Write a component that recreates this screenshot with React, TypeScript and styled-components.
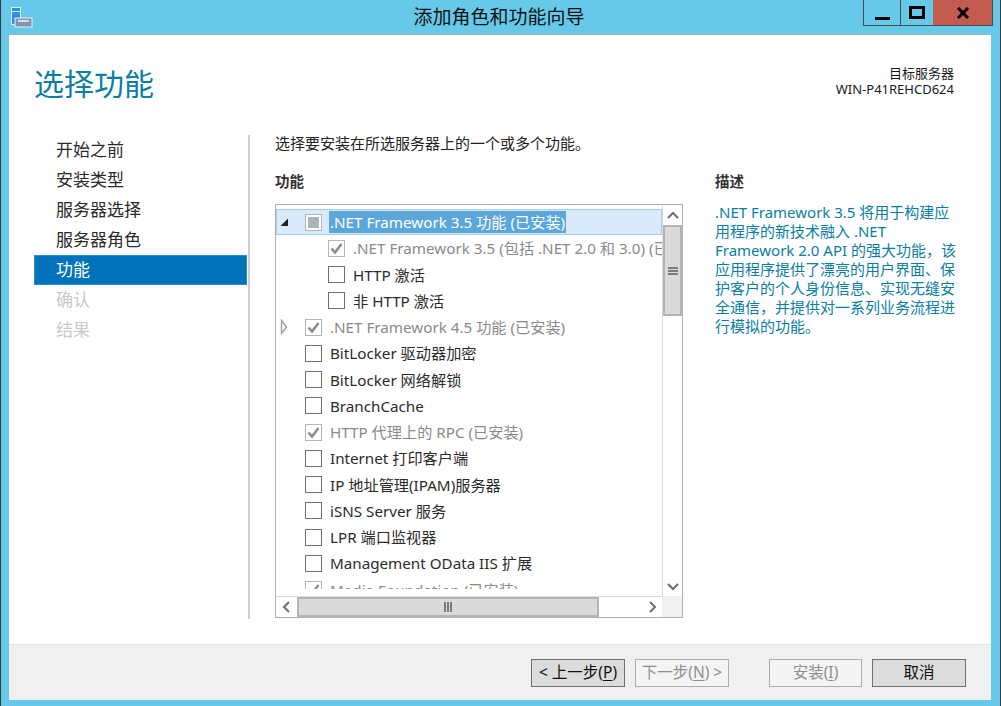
import styled, { createGlobalStyle } from "styled-components";

const GlobalStyle = createGlobalStyle`
  html, body {
    margin: 0;
    padding: 0;
    width: 1001px;
    height: 706px;
    overflow: hidden;
    background: #66c9ea;
  }
  * { box-sizing: border-box; }
  body {
    font-family: "Noto Sans", "Noto Sans CJK SC", sans-serif;
    color: #1e1e1e;
  }
`;

const Frame = styled.div`
  width: 1001px;
  height: 706px;
  display: flex;
  flex-direction: column;
  background: #66c9ea;
  border-left: 1px solid #3a3a3a;
  border-right: 1px solid #3a3a3a;
  padding: 0 9px 6px 8px;
`;

const TitleBar = styled.div`
  height: 35px;
  flex: none;
  position: relative;
  display: flex;
  justify-content: center;
`;

const AppIcon = styled.svg`
  position: absolute;
  left: 2px;
  top: 7px;
`;

const Title = styled.div`
  font-size: 19px;
  line-height: 34px;
  color: #111;
  padding-right: 2px;
`;

const WinButtons = styled.div`
  position: absolute;
  right: -2px;
  top: 0;
  height: 26px;
  display: flex;
  border: 1px solid #4a4a4a;
  border-top: none;
`;

const WinButton = styled.div<{ $w: number; $close?: boolean }>`
  width: ${(p) => p.$w}px;
  background: ${(p) => (p.$close ? "#c25b50" : "transparent")};
  border-left: ${(p) => (p.$close ? "none" : "1px solid #4a4a4a")};
  display: flex;
  align-items: center;
  justify-content: center;
  &:first-child { border-left: none; }
`;

const Client = styled.div`
  flex: 1;
  display: flex;
  flex-direction: column;
  background: #fff;
  box-shadow: 0 -1px 0 #9db7c2;
`;

const Header = styled.div`
  height: 100px;
  flex: none;
  display: flex;
  justify-content: space-between;
  padding: 29px 37px 0 25px;
`;

const PageTitle = styled.div`
  font-size: 30px;
  line-height: 40px;
  color: #0a7ea4;
`;

const ServerInfo = styled.div`
  font-size: 13px;
  line-height: 16px;
  text-align: right;
  padding-top: 1px;
  color: #1a1a1a;
`;

const Main = styled.div`
  flex: 1;
  display: flex;
  min-height: 0;
`;

const Nav = styled.div`
  width: 241px;
  flex: none;
  height: 484px;
  margin-right: 25px;
  border-right: 2px solid #d0d0d0;
  padding: 0 1px 0 25px;
`;

const NavItem = styled.div<{ $active?: boolean; $disabled?: boolean }>`
  height: 30px;
  line-height: 30px;
  font-size: 17px;
  padding-left: 22px;
  color: ${(p) => (p.$active ? "#fff" : p.$disabled ? "#c9c9c9" : "#2a2a2a")};
  background: ${(p) => (p.$active ? "#0072bc" : "transparent")};
  box-shadow: ${(p) => (p.$active ? "inset 0 0 0 1px #2a8bc9" : "none")};
`;

const Content = styled.div`
  flex: 1;
  min-width: 0;
`;

const Intro = styled.div`
  font-size: 15px;
  line-height: 17px;
  height: 36px;
  color: #222;
`;

const Columns = styled.div`
  display: flex;
  gap: 32px;
`;

const ListColumn = styled.div`
  width: 408px;
  flex: none;
`;

const SectionTitle = styled.div<{ $h: number }>`
  font-size: 14.5px;
  line-height: 20px;
  height: ${(p) => p.$h}px;
  font-weight: 700;
  color: #333;
`;

const ListBox = styled.div`
  width: 408px;
  height: 414px;
  border: 1.5px solid #b0b0b0;
  display: grid;
  grid-template-columns: 1fr 20px;
  grid-template-rows: 1fr 21px;
  background: #fff;
`;

const Rows = styled.div`
  overflow: hidden;
  padding-top: 4px;
  margin-bottom: 7px;
  min-width: 0;
  min-height: 0;
`;

const Row = styled.div<{ $selected?: boolean }>`
  height: 26.25px;
  display: flex;
  align-items: center;
  white-space: nowrap;
  font-size: 15.2px;
  background: ${(p) => (p.$selected ? "#d9eafc" : "transparent")};
  box-shadow: ${(p) => (p.$selected ? "inset 0 0 0 1px #a5cdf0" : "none")};
`;

const ArrowSlot = styled.div`
  width: 29px;
  flex: none;
  display: flex;
  align-items: center;
  padding-left: 4px;
`;

const Indent = styled.div`
  width: 52px;
  flex: none;
`;

const Check = styled.div<{ $muted?: boolean }>`
  width: 17px;
  height: 17px;
  flex: none;
  border: 1px solid ${(p) => (p.$muted ? "#b5b5b5" : "#707070")};
  background: #fff;
  display: flex;
  align-items: center;
  justify-content: center;
`;

const Partial = styled.div`
  width: 11px;
  height: 11px;
  background: #adb3bb;
`;

const Label = styled.span<{ $muted?: boolean; $selected?: boolean }>`
  margin-left: 7px;
  color: ${(p) => (p.$selected ? "#fff" : p.$muted ? "#8a8a8a" : "#2b2b2b")};
  background: ${(p) => (p.$selected ? "#5ba7dc" : "transparent")};
  line-height: 22px;
  padding: 0 1px;
`;

const VBar = styled.div`
  border-left: 1px solid #dcdcdc;
  display: flex;
  flex-direction: column;
`;

const HBar = styled.div`
  border-top: 1px solid #dcdcdc;
  display: flex;
  min-width: 0;
`;

const ScrollBtn = styled.div<{ $size: number; $axis: "x" | "y" }>`
  flex: none;
  ${(p) => (p.$axis === "y" ? `height: ${p.$size}px;` : `width: ${p.$size}px;`)}
  display: flex;
  align-items: center;
  justify-content: center;
`;

const Spacer = styled.div`
  flex: 1;
`;

const Thumb = styled.div<{ $size: number; $axis: "x" | "y" }>`
  flex: none;
  ${(p) => (p.$axis === "y" ? `height: ${p.$size}px;` : `width: ${p.$size}px;`)}
  background: #dadada;
  border: 2px solid #b4b4b4;
  display: flex;
  align-items: center;
  justify-content: center;
  gap: 1px;
  flex-direction: ${(p) => (p.$axis === "y" ? "column" : "row")};
`;

const Grip = styled.div<{ $axis: "x" | "y" }>`
  background: #7c7c7c;
  ${(p) => (p.$axis === "y" ? "width: 10px; height: 2px;" : "width: 2px; height: 10px;")}
`;

const Corner = styled.div`
  background: #f0f0f0;
`;

const Description = styled.div`
  width: 245px;
  flex: none;
`;

const DescText = styled.div`
  font-size: 15px;
  line-height: 19px;
  color: #0a7ea4;
  white-space: nowrap;
`;

const Footer = styled.div`
  height: 56px;
  flex: none;
  background: #f0f0f0;
  border-top: 1px solid #e2e2e2;
  display: flex;
  align-items: center;
  padding: 0 25px 0 522px;
`;

const Button = styled.div<{ $disabled?: boolean; $w: number; $ml?: number }>`
  width: ${(p) => p.$w}px;
  height: 28px;
  margin-left: ${(p) => p.$ml ?? 0}px;
  font-size: 15.5px;
  line-height: 25px;
  text-align: center;
  white-space: nowrap;
  border: 1px solid ${(p) => (p.$disabled ? "#adadad" : "#707070")};
  background: ${(p) => (p.$disabled ? "#f4f4f4" : "#dcdcdc")};
  color: ${(p) => (p.$disabled ? "#8f8f8f" : "#111")};
  u { text-underline-offset: 2px; }
`;

const CheckMark = () => (
  <svg width="13" height="13" viewBox="0 0 13 13">
    <path d="M1.5 6.5 L5 10.5 L11.5 2" fill="none" stroke="#8a8a8a" strokeWidth="2.4" />
  </svg>
);

const Chevron = ({ dir }: { dir: "up" | "down" | "left" | "right" }) => {
  const d = {
    up: "M1 7 L6 2 L11 7",
    down: "M1 2 L6 7 L11 2",
    left: "M7 1 L2 6 L7 11",
    right: "M2 1 L7 6 L2 11",
  }[dir];
  const vertical = dir === "up" || dir === "down";
  return (
    <svg width={vertical ? 12 : 9} height={vertical ? 9 : 12} viewBox={vertical ? "0 0 12 9" : "0 0 9 12"}>
      <path d={d} fill="none" stroke="#6e6e6e" strokeWidth="2" />
    </svg>
  );
};

type Feature = {
  label: string;
  check: "none" | "checked" | "partial";
  muted?: boolean;
  child?: boolean;
  expander?: "open" | "closed";
  selected?: boolean;
};

const features: Feature[] = [
  { label: ".NET Framework 3.5 功能 (已安装)", check: "partial", muted: true, expander: "open", selected: true },
  { label: ".NET Framework 3.5 (包括 .NET 2.0 和 3.0) (已安装)", check: "checked", muted: true, child: true },
  { label: "HTTP 激活", check: "none", child: true },
  { label: "非 HTTP 激活", check: "none", child: true },
  { label: ".NET Framework 4.5 功能 (已安装)", check: "checked", muted: true, expander: "closed" },
  { label: "BitLocker 驱动器加密", check: "none" },
  { label: "BitLocker 网络解锁", check: "none" },
  { label: "BranchCache", check: "none" },
  { label: "HTTP 代理上的 RPC (已安装)", check: "checked", muted: true },
  { label: "Internet 打印客户端", check: "none" },
  { label: "IP 地址管理(IPAM)服务器", check: "none" },
  { label: "iSNS Server 服务", check: "none" },
  { label: "LPR 端口监视器", check: "none" },
  { label: "Management OData IIS 扩展", check: "none" },
  { label: "Media Foundation (已安装)", check: "checked", muted: true },
];

const steps = ["开始之前", "安装类型", "服务器选择", "服务器角色", "功能", "确认", "结果"];

export default function App() {
  return (
    <>
      <GlobalStyle />
      <Frame>
        <TitleBar>
          <AppIcon width="22" height="21" viewBox="0 0 22 21">
            <rect x="0.5" y="0.5" width="9" height="17" fill="#2f8fdc" stroke="#d8eef8" />
            <rect x="1" y="4" width="8" height="1" fill="#d8eef8" />
            <rect x="4" y="11" width="17" height="9" fill="#7f97ac" stroke="#e6eef2" />
            <rect x="7" y="13" width="11" height="2" fill="#d5dde4" />
          </AppIcon>
          <Title>添加角色和功能向导</Title>
          <WinButtons>
            <WinButton $w={36}>
              <svg width="15" height="16" viewBox="0 0 15 16">
                <rect y="12" width="15" height="3" fill="#000" />
              </svg>
            </WinButton>
            <WinButton $w={33}>
              <svg width="16" height="13" viewBox="0 0 16 13">
                <rect x="1.5" y="1.5" width="13" height="10" fill="none" stroke="#000" strokeWidth="3" />
              </svg>
            </WinButton>
            <WinButton $w={59} $close>
              <svg width="14" height="12" viewBox="0 0 14 12">
                <path d="M2 1 L12 11 M12 1 L2 11" stroke="#000" strokeWidth="3" />
              </svg>
            </WinButton>
          </WinButtons>
        </TitleBar>
        <Client>
          <Header>
            <PageTitle>选择功能</PageTitle>
            <ServerInfo>
              目标服务器
              <br />
              WIN-P41REHCD624
            </ServerInfo>
          </Header>
          <Main>
            <Nav>
              {steps.map((s, i) => (
                <NavItem key={s} $active={i === 4} $disabled={i > 4}>
                  {s}
                </NavItem>
              ))}
            </Nav>
            <Content>
              <Intro>选择要安装在所选服务器上的一个或多个功能。</Intro>
              <Columns>
                <ListColumn>
                  <SectionTitle $h={33}>功能</SectionTitle>
                  <ListBox>
                    <Rows>
                      {features.map((f) => (
                        <Row key={f.label} $selected={f.selected}>
                          {f.child ? (
                            <Indent />
                          ) : (
                            <ArrowSlot>
                              {f.expander === "open" && (
                                <svg width="9" height="10" viewBox="0 0 9 10">
                                  <path d="M0.5 9 L8 9 L8 1.5 Z" fill="#222" />
                                </svg>
                              )}
                              {f.expander === "closed" && (
                                <svg width="8" height="16" viewBox="0 0 8 16">
                                  <path d="M1.5 1.5 L6.5 8 L1.5 14.5 Z" fill="#fff" stroke="#a0a0a0" strokeWidth="1.4" />
                                </svg>
                              )}
                            </ArrowSlot>
                          )}
                          <Check $muted={f.muted}>
                            {f.check === "partial" && <Partial />}
                            {f.check === "checked" && <CheckMark />}
                          </Check>
                          <Label $muted={f.muted} $selected={f.selected}>
                            {f.label}
                          </Label>
                        </Row>
                      ))}
                    </Rows>
                    <VBar>
                      <ScrollBtn $axis="y" $size={20}>
                        <Chevron dir="up" />
                      </ScrollBtn>
                      <Thumb $axis="y" $size={91}>
                        <Grip $axis="y" />
                        <Grip $axis="y" />
                        <Grip $axis="y" />
                      </Thumb>
                      <Spacer />
                      <ScrollBtn $axis="y" $size={20}>
                        <Chevron dir="down" />
                      </ScrollBtn>
                    </VBar>
                    <HBar>
                      <ScrollBtn $axis="x" $size={21}>
                        <Chevron dir="left" />
                      </ScrollBtn>
                      <Thumb $axis="x" $size={302}>
                        <Grip $axis="x" />
                        <Grip $axis="x" />
                        <Grip $axis="x" />
                      </Thumb>
                      <Spacer />
                      <ScrollBtn $axis="x" $size={20}>
                        <Chevron dir="right" />
                      </ScrollBtn>
                    </HBar>
                    <Corner />
                  </ListBox>
                </ListColumn>
                <Description>
                  <SectionTitle $h={32}>描述</SectionTitle>
                  <DescText>
                    .NET Framework 3.5 将用于构建应
                    <br />
                    用程序的新技术融入 .NET
                    <br />
                    Framework 2.0 API 的强大功能，该
                    <br />
                    应用程序提供了漂亮的用户界面、保
                    <br />
                    护客户的个人身份信息、实现无缝安
                    <br />
                    全通信，并提供对一系列业务流程进
                    <br />
                    行模拟的功能。
                  </DescText>
                </Description>
              </Columns>
            </Content>
          </Main>
          <Footer>
            <Button $w={94}>
              &lt; 上一步(<u>P</u>)
            </Button>
            <Button $w={94} $ml={10} $disabled>
              下一步(<u>N</u>) &gt;
            </Button>
            <Button $w={93} $ml={40} $disabled>
              安装(<u>I</u>)
            </Button>
            <Button $w={94} $ml={10}>
              取消
            </Button>
          </Footer>
        </Client>
      </Frame>
    </>
  );
}
